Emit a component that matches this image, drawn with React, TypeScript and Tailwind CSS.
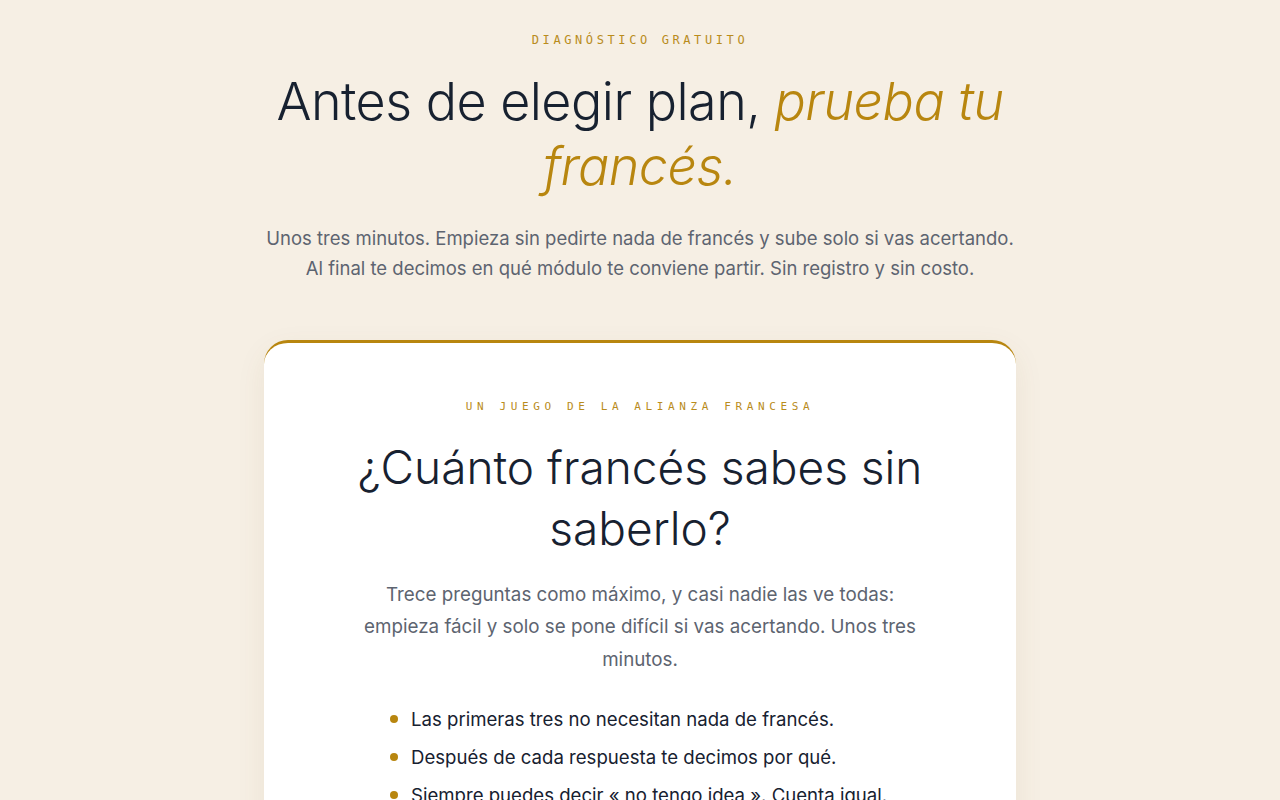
import React from "react";

const sans = "font-['Inter','Noto_Sans',sans-serif]";
const mono = "font-['DejaVu_Sans_Mono','Liberation_Mono',monospace]";

export default function App() {
  return (
    <div className={`min-h-screen bg-[#f6efe4] ${sans} text-[#172130]`}>
      <section className="mx-auto flex w-[752px] flex-col items-center pt-[31px]">
        <p className={`${mono} text-[12px] tracking-[0.3em] text-[#b98c1c]`}>
          DIAGNÓSTICO GRATUITO
        </p>
        <h1 className="mt-[20px] text-center text-[52px] leading-[65px] font-light tracking-[-0.01em] text-[#172130]">
          Antes de elegir plan, <em className="text-[#b8860f]">prueba tu</em>
          <br />
          <em className="text-[#b8860f]">francés.</em>
        </h1>
        <p className="mt-[24px] text-center text-[18.5px] leading-[30px] text-[#5d6470]">
          Unos tres minutos. Empieza sin pedirte nada de francés y sube solo si vas acertando.
          <br />
          Al final te decimos en qué módulo te conviene partir. Sin registro y sin costo.
        </p>

        {/* Card */}
        <div className="mt-[57px] w-full rounded-[24px] border-t-[3px] border-[#b8860f] bg-white px-[48px] pt-[56px] pb-10 shadow-[0_10px_30px_rgba(120,90,40,0.08)]">
          <p className={`${mono} text-center text-[11px] tracking-[0.42em] text-[#b98c1c]`}>
            UN JUEGO DE LA ALIANZA FRANCESA
          </p>
          <h2 className="mt-[21px] text-center text-[46px] leading-[61px] font-light text-[#172130]">
            ¿Cuánto francés sabes sin
            <br />
            saberlo?
          </h2>
          <p className="mx-auto mt-[20px] max-w-[580px] text-center text-[18.8px] leading-[32.5px] text-[#5d6470]">
            Trece preguntas como máximo, y casi nadie las ve todas:
            <br />
            empieza fácil y solo se pone difícil si vas acertando. Unos tres
            <br />
            minutos.
          </p>
          <ul className="mx-auto mt-[30px] flex w-[500px] flex-col gap-[12px]">
            {[
              "Las primeras tres no necesitan nada de francés.",
              "Después de cada respuesta te decimos por qué.",
              "Siempre puedes decir « no tengo idea ». Cuenta igual.",
            ].map((t) => (
              <li key={t} className="flex items-center gap-[13px] text-[18.6px] leading-[26px] text-[#172130]">
                <span className="h-[8px] w-[8px] shrink-0 rounded-full bg-[#b8860f]" />
                {t}
              </li>
            ))}
          </ul>
        </div>
      </section>
    </div>
  );
}
